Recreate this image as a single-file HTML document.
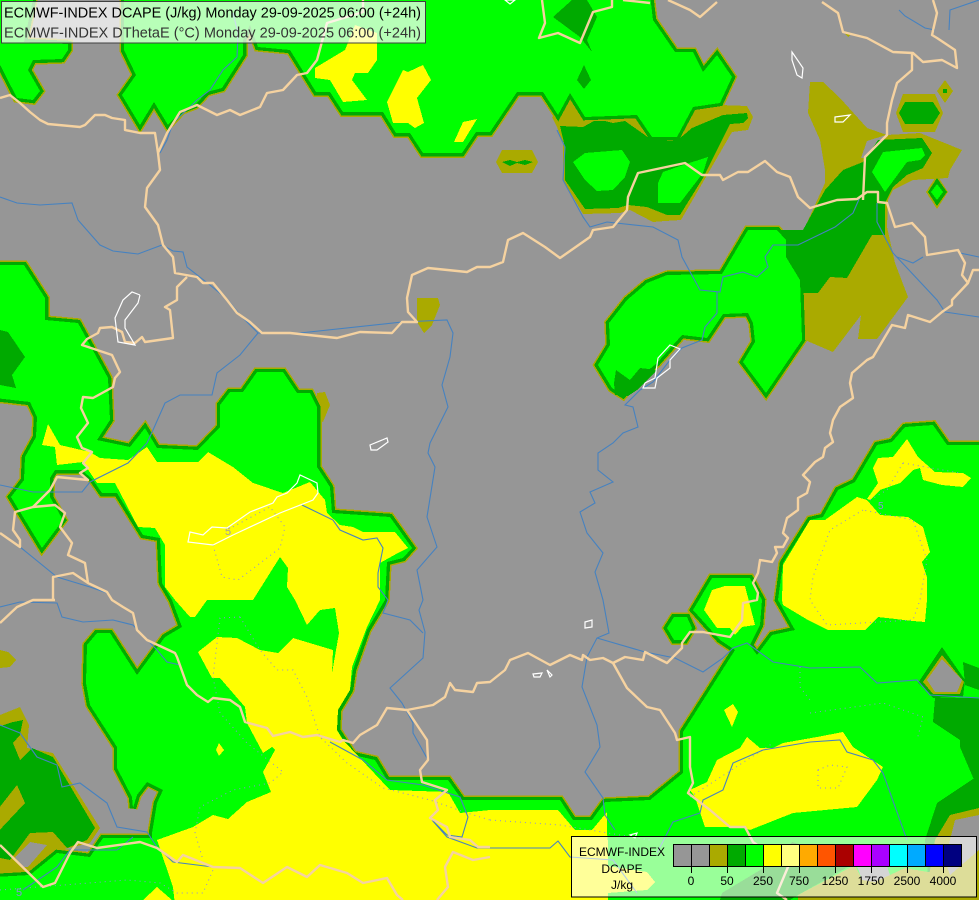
<!DOCTYPE html>
<html><head><meta charset="utf-8"><style>
html,body{margin:0;padding:0;background:#969696}
svg{display:block}
text{font-family:"Liberation Sans",sans-serif}
.f{shape-rendering:crispEdges}
.o{fill:#aaaa00}.d{fill:#00aa00}.g{fill:#00ff00}.y{fill:#ffff00}.x{fill:#969696}
.b{fill:none;stroke:#f5d2a0;stroke-width:2.4;stroke-linejoin:round}
.r{fill:none;stroke:#4682c0;stroke-width:1.1}
.l{fill:none;stroke:#fff;stroke-width:1.2}
.t{fill:none;stroke:#8c8ce0;stroke-width:1;stroke-dasharray:1 4}
</style></head><body>
<svg width="979" height="900" viewBox="0 0 979 900" xmlns="http://www.w3.org/2000/svg">
<defs>
<path id="G" d="M-5,-5L34,-5L24,42L68,44L68,50L62,59L33,60L28,70L40,91L33,100L17,98L-5,55Z
M124,-5L650,-5L653,20L675,52L693,52L703,72L717,55L732,77L720,103L693,107L677,137L652,137L637,115L585,117L570,93L558,115L543,92L517,92L490,132L476,132L462,153L423,153L410,133L396,133L383,112L343,112L330,92L316,92L290,50L258,47L250,25L243,40L243,55L222,88L207,92L195,105L182,110L168,125L154,102L140,125L122,95L136,75L124,50Z
M627,300L647,283L667,275L722,274L748,230L777,230L786,240L786,257L800,280L802,340L766,393L743,362L755,342L753,323L748,313L723,314L707,338L682,335L657,363L633,383L623,395L612,388L598,365L610,345L609,323Z
M667,628L674,617L687,617L692,628L685,640L674,640Z
M-5,265L24,265L45,298L45,320L78,323L108,378L110,420L97,440L130,447L145,428L157,448L198,450L220,427L220,405L230,392L243,392L257,372L283,372L297,393L310,393L317,407L317,467L330,487L332,513L390,517L412,548L403,558L387,562L385,600L367,630L353,670L350,690L338,710L337,730L353,755L375,760L387,780L448,780L462,800L490,800L560,800L573,820L592,820L605,802L650,800L683,773L683,732L735,650L720,640L693,610L712,578L750,578L762,600L760,625L750,645L757,655L772,635L795,630L778,600L783,563L810,520L823,517L838,490L855,482L877,445L892,442L905,427L933,425L947,445L985,445L985,905L-5,905L-5,877L30,875L57,853L90,857L103,838L152,838L152,833L157,803L163,790L147,782L137,795L133,808L132,797L117,768L117,747L90,705L86,683L87,645L97,633L110,633L137,675L165,637L182,627L172,600L162,583L160,538L143,535L117,493L102,493L93,480L82,470L55,470L50,478L50,497L63,520L42,548L11,497L24,480L25,457L36,437L37,417L30,402L-5,398Z"/>
</defs>
<rect width="979" height="900" fill="#969696"/>
<!-- olive layer -->
<use href="#G" class="f" fill="none" stroke="#aaaa00" stroke-width="9.5" stroke-miterlimit="3"/>
<g class="f o">
<polygon points="552,117 570,100 600,120 720,105 747,106 753,117 748,130 732,132 681,220 665,221 653,222 630,210 620,213 583,214 563,180 563,143 557,127"/>
<polygon points="496,162 502,150 532,150 538,162 532,173 502,173"/>
<polygon points="810,82 823,82 840,98 867,128 887,135 920,133 962,150 950,170 948,178 913,180 893,190 888,200 887,227 895,263 908,297 877,339 858,339 861,315 833,352 805,340 803,300 805,227 825,183 825,170 820,140 808,113"/>
<polygon points="937,91 945,80 953,91 945,103"/>
<polygon points="896,113 903,94 935,94 943,113 935,132 903,132"/>
<polygon points="937,175 948,192 937,209 926,192"/>
<polygon points="843,32 853,33 848,37"/>
<polygon points="0,650 8,652 16,660 10,667 0,668"/>
<polygon points="-5,717 20,707 29,725 27,748 53,753 100,828 90,843 60,850 30,870 -5,880"/>
<polygon points="417,298 438,298 440,305 432,325 424,333 417,322"/>
<polygon points="317,393 325,392 330,405 323,422 318,420"/>
</g>
<polygon class="f x" points="861,158 867,141 886,135 875,158"/>
<!-- dark layer -->
<use href="#G" class="f" fill="none" stroke="#00aa00" stroke-width="6.5" stroke-miterlimit="3"/>
<g class="f d">
<polygon points="560,126 583,127 594,121 605,121 613,123 625,121 652,140 672,141 679,139 692,128 723,115 747,113 748,118 743,123 730,124 703,178 680,215 667,215 647,207 628,205 618,208 585,209 565,180 565,147"/>
<polygon points="502,162 510,160 517,162 525,160 533,162 525,165 517,163 510,166"/>
<polygon points="878,140 922,138 932,153 923,168 907,175 893,187 885,203 885,235 872,235 847,278 830,277 818,293 803,293 800,280 786,257 786,240 775,230 803,230 825,190 843,170 863,162"/>
<polygon points="899,113 905,102 933,102 940,113 933,124 905,124"/>
<polygon points="937,178 947,192 937,206 928,192"/>
<polygon points="943,89 947,89 947,93 943,93"/>
<polygon points="-5,728 13,722 23,720 20,735 13,743 20,760 32,748 53,757 95,828 87,840 67,848 53,832 30,833 10,860 -5,857"/>
</g>
<polygon class="f o" points="-5,813 17,785 25,803 -5,835"/>
<polygon class="f x" points="15,857 30,842 47,845 28,867 22,867"/>
<!-- green layer -->
<use href="#G" class="f g"/>
<g class="f g">
<polygon points="573,162 585,153 622,150 630,162 625,177 613,190 597,191 585,180"/>
<polygon points="658,203 658,183 663,172 683,165 708,157 703,173 680,203"/>
<polygon points="872,172 883,152 922,148 925,155 920,160 907,162 885,192"/>
<polygon points="937,184 943,192 937,200 931,192"/>
</g>
<g class="f d">
<polygon points="553,17 572,0 587,0 597,17 587,40 592,52 580,37"/>
<polygon points="577,80 584,65 591,80 584,89"/>
<polygon points="0,330 8,332 25,357 12,375 16,388 0,385"/>
<polygon points="614,383 616,370 630,380 640,368 657,370 637,390 628,396 615,395"/>
<polygon points="918,683 942,647 965,680 963,697 933,698"/>
<polygon points="935,698 979,698 979,780 975,782 960,747 960,740 933,722"/>
<polygon points="963,662 979,668 979,690 965,685"/>
<polygon points="979,775 937,803 925,840 930,900 979,900"/>
<polygon points="722,893 772,863 792,842 855,863 798,895 790,900 720,900"/>
</g>
<g class="f o">
<polygon points="923,682 942,655 964,682 960,694 933,694"/>
<polygon points="979,808 950,815 935,840 925,900 979,900"/>
<polygon points="798,895 855,865 862,880 875,882 905,868 945,875 979,850 979,900 798,900"/>
</g>
<g class="f x">
<polygon points="927,680 942,659 962,680 957,692 935,692"/>
<polygon points="945,860 955,820 979,815 979,850 950,875"/>
<polygon points="855,860 885,860 890,875 875,882 862,880"/>
</g>
<!-- yellow -->
<g class="f y">
<polygon points="315,68 345,50 355,25 377,33 377,60 368,73 355,73 352,80 367,100 343,102 330,80 315,78"/>
<polygon points="387,102 403,70 408,72 423,65 431,80 417,98 424,123 415,128 408,123 393,123"/>
<polygon points="454,142 463,122 477,119 463,142"/>
<polygon points="48,424 60,445 90,452 100,458 128,460 147,447 157,462 198,462 208,452 233,467 253,483 283,493 310,482 325,500 327,513 340,525 353,527 363,532 395,532 408,548 398,553 380,563 380,600 367,627 352,667 350,690 338,710 337,730 343,740 390,790 448,792 460,813 490,810 558,810 575,830 592,830 607,812 608,905 175,905 173,887 157,840 193,827 213,815 228,819 247,802 271,792 263,772 275,750 272,747 263,753 247,723 245,707 220,678 212,678 198,652 217,637 237,638 260,650 278,653 293,638 333,650 332,673 339,633 335,608 320,610 307,625 295,600 287,587 288,568 280,557 253,600 207,600 195,617 190,617 175,600 165,587 165,545 155,528 138,527 115,483 97,483 83,462 57,465 55,447 42,445"/>
<polygon points="600,840 608,840 608,866 647,872 655,882 647,890 608,893 600,900"/>
<polygon points="216,750 219,743 224,750 219,756"/>
<polygon points="143,900 157,887 172,900"/>
<polygon points="782,600 783,565 810,520 825,520 857,497 867,500 880,515 908,517 923,527 930,552 922,562 927,577 927,600 925,622 913,621 878,617 865,630 828,630 808,620 783,605"/>
<polygon points="867,499 878,483 873,468 878,458 893,457 907,439 918,457 935,472 963,473 971,478 963,487 942,485 923,480 920,468 913,470 900,483 880,490 870,500"/>
<polygon points="704,610 712,590 725,586 745,586 755,625 742,627 735,635 730,628 717,628"/>
<polygon points="724,710 733,704 738,712 732,727"/>
<polygon points="690,790 707,782 717,760 740,748 747,737 760,748 773,748 783,743 817,737 843,732 853,747 883,767 877,780 857,807 793,813 750,830 743,827 727,827 705,827 695,797"/>
</g>
<!-- dotted contours -->
<g class="t">
<polyline points="213,545 222,577 238,580 280,548 285,527 270,507 227,530"/>
<polyline points="240,617 220,618 213,677 220,713 247,743 283,772 270,783 233,790 200,807 195,833 203,860"/>
<polyline points="240,617 260,650 277,670 293,670 307,697 320,737 347,763 383,788 430,800 467,813 490,820"/>
<polyline points="0,890 127,880 160,883 177,893 203,893 213,870"/>
<polyline points="863,510 830,530 813,577 810,600 827,625 913,620 920,600 927,560 913,520 863,510"/>
<polyline points="903,463 887,490 870,500"/><polyline points="903,463 960,473"/>
<polygon points="818,770 830,765 847,767 838,788 818,788"/>
<polyline points="690,797 773,743"/>
<polyline points="800,667 800,687 810,700"/>
<polyline points="810,713 883,703 923,717 917,740"/>
<polyline points="490,820 560,825 650,840"/>
</g>
<text x="225" y="535" font-size="11" fill="#a0a0a0">5</text>
<text x="16" y="896" font-size="11" fill="#8c8ce0">5</text>
<text x="878" y="509" font-size="10" fill="#8c8ce0">5</text>
<!-- rivers -->
<g class="r">
<polyline points="0,197 17,203 40,205 72,203 78,220 100,245 113,251 138,254 162,245 173,251 183,252 187,267 210,285 228,300 240,315 258,333 240,355 217,373 212,395 180,395 165,403 153,430 147,443 128,463 90,482 82,492 33,492 0,485"/>
<polyline points="160,153 167,140 173,123 197,100 210,90 223,70 237,57 238,33 233,13"/>
<polyline points="258,333 300,333 402,322 447,320 453,333 450,357 442,385 448,407 430,443 428,453 435,467 427,517 437,547 417,570 423,600 419,610 425,632 423,658 390,688 402,703 413,723 413,733 428,760"/>
<polyline points="302,505 333,520 340,530 363,540 377,538 383,548 378,573 378,587 388,600 383,613 410,620 423,633"/>
<polyline points="0,533 20,547 57,577 90,587 107,593"/>
<polyline points="0,607 20,602 57,603 62,617 83,622 113,620 133,625 157,650 167,662 180,665"/>
<polyline points="0,725 20,733 37,757 57,765 62,787 80,783 107,803 117,827 147,832 157,847 173,862 213,867 240,868 263,883 287,867 307,877 320,865 347,873 363,883 387,878 397,895"/>
<polyline points="23,890 57,867 70,850 117,850 133,837"/>
<polyline points="330,742 363,760 387,780 423,785 460,797 468,817 462,837 447,835 432,820 447,837 477,848 490,848 550,848 558,841 570,857 613,860 637,893"/>
<polyline points="557,130 565,147 563,180 583,217 590,227 607,222 653,227 678,240 682,257 700,290 720,292 723,277 743,272 757,277 768,267 765,257 773,245 798,245 835,227 853,213 860,197"/>
<polyline points="877,203 877,222 893,253 937,300 945,312 979,317"/>
<polyline points="923,257 913,263 897,257"/><polyline points="960,253 979,257"/>
<polyline points="717,292 717,313 705,327 702,340 682,348 670,360 653,382 640,390 625,405 633,407 638,427 623,433 613,443 598,453 598,470 613,482 590,492 595,503 580,512 587,533 603,553 595,572 603,600 609,633 597,638 587,657 582,687 597,725 600,747 585,772 603,798 605,815 615,830"/>
<polyline points="597,638 645,652 675,658 703,672 723,658 733,648 747,643 773,662 810,668 860,667 877,683 917,680 930,695 979,698"/>
<polyline points="907,840 883,773 873,760 847,752 840,740 810,742 763,750 733,763 723,790 703,800 700,813 673,822 657,853"/>
<polyline points="899,10 905,16 925,28 935,30"/><polyline points="979,0 950,10 949,30"/>
</g>
<!-- borders -->
<g class="b">
<polyline points="0,98 10,95 20,103 30,112 40,120 48,124 80,127 85,125 95,115 105,115 112,118 125,120 125,130 140,133 155,133 158,153 160,170 147,188 145,207 158,225 163,245 173,257 175,273 197,277 203,283 213,283 227,300 237,313 250,322 262,333 290,333 337,338 360,332 392,333 402,322 417,322 408,312 407,298 412,275 428,268 467,272 477,267 490,267 503,262 508,240 523,233 545,247 560,258 590,237 593,230 613,227 627,210 628,197 638,173 685,163 702,175 720,175 723,180 738,172 748,172 765,161 777,172 790,177 798,197 810,208 837,200 857,199 867,192 878,192 878,202 887,203 895,227 912,223 925,237 927,255 958,250 965,263 962,275 968,283 973,270 979,270"/>
<polyline points="968,283 952,300 952,305 942,312 930,322 908,315 905,328 892,325 873,357 867,360 852,373 850,383 853,398 840,407 833,420 830,433 833,442 825,448 823,457 815,462 803,475 810,482 807,493 798,498 798,510 787,518 783,533 788,538 783,547 775,547 777,553 772,562 760,560 758,573 753,583 758,593 757,600 743,603 742,620 730,637 703,632 690,632 682,643 682,648 667,663 645,652 643,660 625,657 613,663 603,658 590,660 583,655 582,660 570,655 550,665 528,653 510,660 505,670 490,682 477,683 473,692 455,690 450,683 445,697 433,705 407,710 387,708 377,725 360,735 353,743 343,740 340,742 317,735 303,737 290,732 273,736 267,728 245,722 240,707 230,700 213,698 208,702 197,695 187,685 177,657 175,653 147,640 137,630 133,613 123,607 112,600 107,592 88,583 85,563 68,555 72,543 60,527 65,513 55,505 33,507 15,512 13,530 20,540 20,547 0,533"/>
<polyline points="33,507 50,490 57,477 88,480 80,473 88,468 83,463 92,452 82,448 77,437 88,423 81,408 83,397 93,398 113,387 115,378 120,372 112,355 97,350 82,345 87,339 98,333 100,328 112,327 122,332 125,342 135,343 142,337 145,342 173,338 170,310 165,307 177,300 177,287 187,277"/>
<polyline points="53,600 53,577 73,573 88,583"/><polyline points="55,600 33,600 17,607 0,623"/>
<polyline points="0,845 43,887 55,883 70,853 78,842 97,848 140,842 157,848 177,862 183,855 213,867 240,868 263,883 287,867 307,877 320,865 347,873 363,883 387,878 397,895 403,900"/>
<polyline points="490,857 473,860 453,852 445,867 448,887 437,900"/>
<polyline points="407,710 427,740 428,760 420,770 422,782 447,790 435,800 438,810 430,818 447,827 450,837 470,840 478,847 490,847"/>
<polyline points="613,663 627,688 647,707 660,710 675,733 677,740 690,737 690,767 693,783 688,793 710,810 730,827 745,827 753,842 788,867 777,893 787,900"/>
<polyline points="158,153 167,133 180,112 197,105 217,115 230,110 240,115 260,107 267,93 283,90 297,75 307,73 317,60 327,23 363,12 363,0"/>
<polyline points="542,0 545,23 539,38 558,33 580,43 593,12 612,7 612,0"/><polyline points="623,0 650,3"/>
<polyline points="668,0 690,10 700,17 717,2"/>
<polyline points="822,2 838,13 843,32 867,38 893,52 913,53 923,62 942,60 957,68 955,50 937,38 932,35 937,13 933,0"/>
<polyline points="912,53 912,70 897,83 892,100 887,123 887,135 865,157 863,200"/>
</g>
<!-- lakes -->
<g class="l">
<polyline points="140,295 132,292 123,300 115,318 118,342 135,345 125,328 125,320 138,303 140,295"/>
<polygon points="370,445 387,438 388,442 377,450 371,450"/>
<polygon points="190,532 203,535 212,527 227,528 250,512 273,503 277,497 287,493 297,483 300,475 317,483 318,493 313,500 280,513 233,535 213,545 188,542"/>
<polygon points="792,52 803,68 802,78 797,75 792,60"/>
<polygon points="835,117 850,115 843,122 835,122"/>
<polygon points="670,345 680,349 670,360 670,368 657,378 655,388 643,388 645,383 655,378 658,358"/>
<polygon points="585,622 592,620 592,627 585,628"/>
<polygon points="533,674 542,673 540,677 534,677"/>
<polygon points="547,670 552,675 550,677"/>
<polygon points="505,0 515,0 510,4"/>
<polygon points="630,835 637,833 635,838"/>
</g>
<!-- title box -->
<rect x="1.5" y="1.5" width="424" height="41.5" fill="#fff" fill-opacity="0.72" stroke="#404040" stroke-width="1"/>
<text x="4" y="17.5" font-size="14.5" fill="#000" textLength="417" lengthAdjust="spacingAndGlyphs">ECMWF-INDEX DCAPE (J/kg) Monday 29-09-2025 06:00 (+24h)</text>
<text x="4" y="37.5" font-size="14.5" fill="#333" textLength="417" lengthAdjust="spacingAndGlyphs">ECMWF-INDEX DThetaE (°C) Monday 29-09-2025 06:00 (+24h)</text>
<!-- colour legend -->
<rect x="571.5" y="836.5" width="405" height="60.5" fill="#fff" fill-opacity="0.6" stroke="#000" stroke-width="1"/>
<g font-size="12" fill="#000" text-anchor="middle">
<text x="622" y="856" textLength="86" lengthAdjust="spacing">ECMWF-INDEX</text>
<text x="622" y="873">DCAPE</text>
<text x="622" y="889">J/kg</text>
</g>
<g stroke="#000" stroke-width="1" class="f">
<rect x="673.5" y="844.5" width="18" height="22" fill="#969696"/>
<rect x="691.5" y="844.5" width="18" height="22" fill="#969696"/>
<rect x="709.5" y="844.5" width="18" height="22" fill="#aaaa00"/>
<rect x="727.5" y="844.5" width="18" height="22" fill="#00aa00"/>
<rect x="745.5" y="844.5" width="18" height="22" fill="#00ff00"/>
<rect x="763.5" y="844.5" width="18" height="22" fill="#ffff00"/>
<rect x="781.5" y="844.5" width="18" height="22" fill="#ffff80"/>
<rect x="799.5" y="844.5" width="18" height="22" fill="#ffaa00"/>
<rect x="817.5" y="844.5" width="18" height="22" fill="#ff5500"/>
<rect x="835.5" y="844.5" width="18" height="22" fill="#aa0000"/>
<rect x="853.5" y="844.5" width="18" height="22" fill="#ff00ff"/>
<rect x="871.5" y="844.5" width="18" height="22" fill="#aa00ff"/>
<rect x="889.5" y="844.5" width="18" height="22" fill="#00ffff"/>
<rect x="907.5" y="844.5" width="18" height="22" fill="#00aaff"/>
<rect x="925.5" y="844.5" width="18" height="22" fill="#0000ff"/>
<rect x="943.5" y="844.5" width="18" height="22" fill="#000080"/>
<path d="M691.5,866V873M727.5,866V873M763.5,866V873M799.5,866V873M835.5,866V873M871.5,866V873M907.5,866V873M943.5,866V873" fill="none"/>
</g>
<g font-size="12" fill="#000" text-anchor="middle">
<text x="691" y="885">0</text>
<text x="727" y="885">50</text>
<text x="763" y="885">250</text>
<text x="799" y="885">750</text>
<text x="835" y="885">1250</text>
<text x="871" y="885">1750</text>
<text x="907" y="885">2500</text>
<text x="943" y="885">4000</text>
</g>
</svg>
</body></html>
